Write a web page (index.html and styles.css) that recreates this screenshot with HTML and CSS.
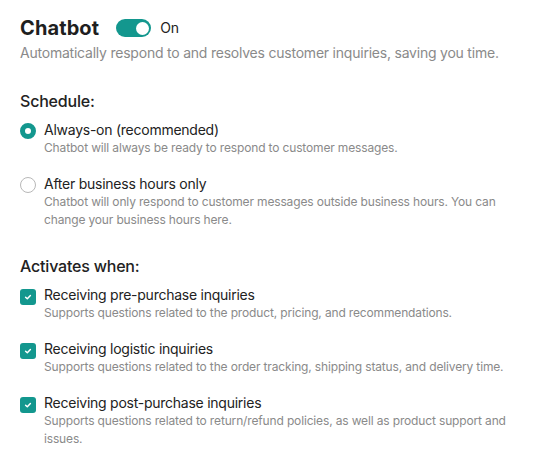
FILE: index.html
```html
<!DOCTYPE html>
<html lang="en">
<head>
<meta charset="utf-8">
<title>Chatbot settings</title>
<link rel="stylesheet" href="styles.css">
</head>
<body>
<div class="page">
  <header class="head">
    <div class="title-row">
      <h1 class="title">Chatbot</h1>
      <span class="toggle on"><span class="knob"></span></span>
      <span class="toggle-label">On</span>
    </div>
    <p class="desc">Automatically respond to and resolves customer inquiries, saving you time.</p>
  </header>

  <section class="group">
    <h2 class="group-title">Schedule:</h2>
    <div class="options">
      <div class="option">
        <span class="radio checked"></span>
        <div class="option-text">
          <div class="label">Always-on (recommended)</div>
          <div class="sub">Chatbot will always be ready to respond to customer messages.</div>
        </div>
      </div>
      <div class="option">
        <span class="radio"></span>
        <div class="option-text">
          <div class="label">After business hours only</div>
          <div class="sub">Chatbot will only respond to customer messages outside business hours. You can change your business hours here.</div>
        </div>
      </div>
    </div>
  </section>

  <section class="group group-2">
    <h2 class="group-title">Activates when:</h2>
    <div class="options">
      <div class="option">
        <span class="check"><svg viewBox="0 0 16 16" width="16" height="16"><path d="M5.6 8.2 L7.3 9.8 L10.4 6.6" fill="none" stroke="#fff" stroke-width="1.5" stroke-linecap="round" stroke-linejoin="round"/></svg></span>
        <div class="option-text">
          <div class="label">Receiving pre-purchase inquiries</div>
          <div class="sub">Supports questions related to the product, pricing, and recommendations.</div>
        </div>
      </div>
      <div class="option">
        <span class="check"><svg viewBox="0 0 16 16" width="16" height="16"><path d="M5.6 8.2 L7.3 9.8 L10.4 6.6" fill="none" stroke="#fff" stroke-width="1.5" stroke-linecap="round" stroke-linejoin="round"/></svg></span>
        <div class="option-text">
          <div class="label">Receiving logistic inquiries</div>
          <div class="sub">Supports questions related to the order tracking, shipping status, and delivery time.</div>
        </div>
      </div>
      <div class="option">
        <span class="check"><svg viewBox="0 0 16 16" width="16" height="16"><path d="M5.6 8.2 L7.3 9.8 L10.4 6.6" fill="none" stroke="#fff" stroke-width="1.5" stroke-linecap="round" stroke-linejoin="round"/></svg></span>
        <div class="option-text">
          <div class="label">Receiving post-purchase inquiries</div>
          <div class="sub">Supports questions related to return/refund policies, as well as product support and issues.</div>
        </div>
      </div>
    </div>
  </section>
</div>
</body>
</html>
```

FILE: styles.css
```css
* { box-sizing: border-box; }
html, body { margin: 0; padding: 0; background: #fff; }
body {
  font-family: Inter, "Noto Sans", "Liberation Sans", sans-serif;
  color: #222;
}
.page {
  padding: 17px 20px 0 20px;
}
.title-row {
  display: flex;
  align-items: center;
  height: 22px;
}
.title {
  margin: 0;
  font-size: 20px;
  font-weight: 700;
  line-height: 22px;
  letter-spacing: 0.1px;
  color: #1f1f1f;
}
.toggle {
  display: inline-flex;
  align-items: center;
  justify-content: flex-end;
  width: 35px;
  height: 18px;
  border-radius: 9px;
  background: #13978e;
  margin-left: 17px;
  padding: 0 2px;
}
.knob {
  width: 13px;
  height: 13px;
  border-radius: 50%;
  background: #fff;
}
.toggle-label {
  margin-left: 9px;
  font-size: 14px;
  line-height: 20px;
  letter-spacing: -0.2px;
  color: #222;
}
.desc {
  margin: 4px 0 0;
  font-size: 14px;
  line-height: 20px;
  letter-spacing: -0.22px;
  color: #8a8a8a;
}
.group { margin-top: 27px; }
.group-2 { margin-top: 26px; }
.group-title {
  margin: 0;
  font-size: 16px;
  font-weight: 500;
  line-height: 22px;
  letter-spacing: -0.2px;
  color: #222;
}
.options {
  display: flex;
  flex-direction: column;
  gap: 18px;
  margin-top: 9px;
}
.option {
  display: flex;
  align-items: flex-start;
  gap: 8px;
}
.option-text { flex: 1; }
.label {
  font-size: 14px;
  line-height: 18px;
  letter-spacing: -0.25px;
  color: #222;
}
.sub {
  font-size: 12px;
  line-height: 18px;
  letter-spacing: -0.15px;
  color: #8a8a8a;
}
.radio {
  flex: none;
  width: 16px;
  height: 16px;
  border-radius: 50%;
  border: 1px solid #b8b8b8;
  margin-top: 2px;
  background: #fff;
}
.radio.checked {
  border: 5px solid #13978e;
  background: #fff;
}
.check {
  flex: none;
  width: 16px;
  height: 16px;
  border-radius: 3px;
  background: #13978e;
  margin-top: 3px;
  display: flex;
}
.check svg { display: block; }
```
